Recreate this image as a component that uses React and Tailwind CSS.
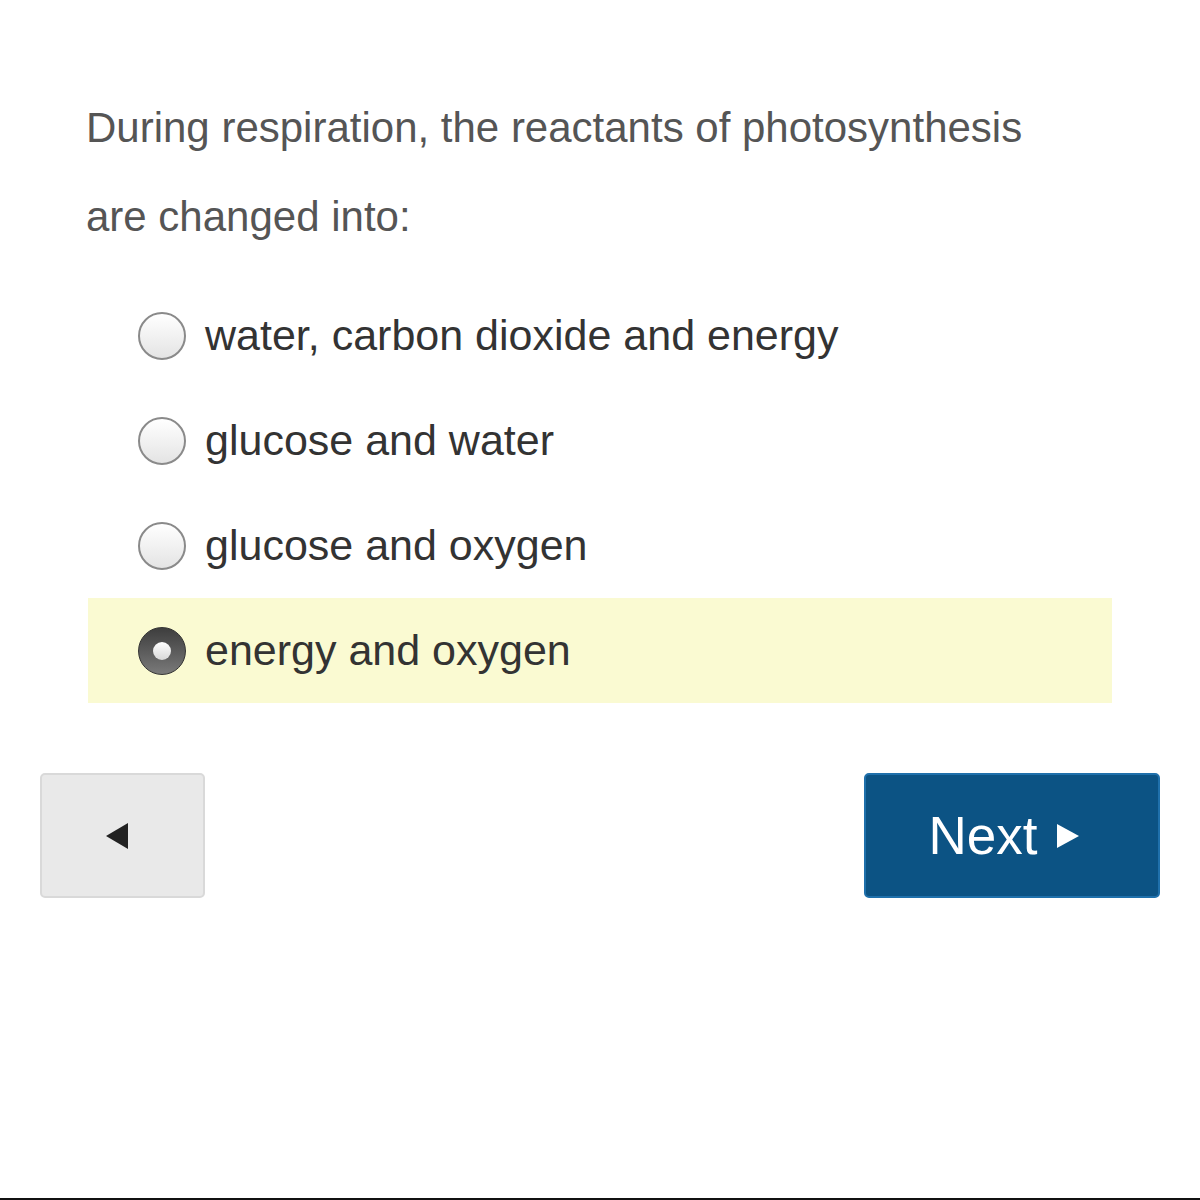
import React, { useState } from 'react';

const options = [
  'water, carbon dioxide and energy',
  'glucose and water',
  'glucose and oxygen',
  'energy and oxygen',
];

function Radio({ checked }) {
  if (checked) {
    return (
      <span className="w-[48px] h-[48px] rounded-full bg-gradient-to-b from-[#3e3e3e] to-[#7a7a7a] border border-[#333333] flex items-center justify-center shrink-0">
        <span className="w-[18px] h-[18px] rounded-full bg-gradient-to-b from-[#ffffff] to-[#d8d8d8]" />
      </span>
    );
  }
  return (
    <span className="w-[48px] h-[48px] rounded-full bg-gradient-to-b from-[#ffffff] to-[#e4e4e4] border-[2px] border-[#8a8a8a] shrink-0" />
  );
}

export default function App() {
  const [selected, setSelected] = useState(3);

  return (
    <div className="w-[1200px] h-[1200px] bg-white relative font-['Liberation_Sans',Arial,sans-serif]">
      <div className="pt-[83px] pl-[86px] pr-[88px]">
        <p className="text-[42px] leading-[89px] text-[#555555]">
          During respiration, the reactants of photosynthesis
          <br />
          are changed into:
        </p>

        <div className="mt-[22px] flex flex-col">
          {options.map((opt, i) => (
            <button
              key={i}
              onClick={() => setSelected(i)}
              className={`w-[1024px] h-[105px] ml-[2px] pl-[50px] flex items-center gap-[19px] text-left ${
                selected === i ? 'bg-[#fafad2]' : 'bg-transparent'
              }`}
            >
              <Radio checked={selected === i} />
              <span className="text-[43px] text-[#333333]">{opt}</span>
            </button>
          ))}
        </div>
      </div>

      {/* Nav buttons */}
      <div className="mt-[70px] px-[40px] flex justify-between">
        <button className="w-[165px] h-[125px] pr-[10px] bg-[#e9e9e9] border-[2px] border-[#d9d9d9] rounded-[5px] flex items-center justify-center">
          <svg width="24" height="26" viewBox="0 0 24 26">
            <polygon points="0,13 22,0 22,26" fill="#222222" />
          </svg>
        </button>
        <button className="w-[296px] h-[125px] pr-[16px] bg-[#0c5384] border-[2px] border-[#1f70ab] rounded-[5px] flex items-center justify-center gap-[20px]">
          <span className="text-[53px] text-white leading-none">Next</span>
          <svg width="22" height="24" viewBox="0 0 22 24">
            <polygon points="0,0 22,12 0,24" fill="#ffffff" />
          </svg>
        </button>
      </div>

      <div className="absolute left-0 bottom-0 w-full h-[2px] bg-[#111111]" />
    </div>
  );
}
